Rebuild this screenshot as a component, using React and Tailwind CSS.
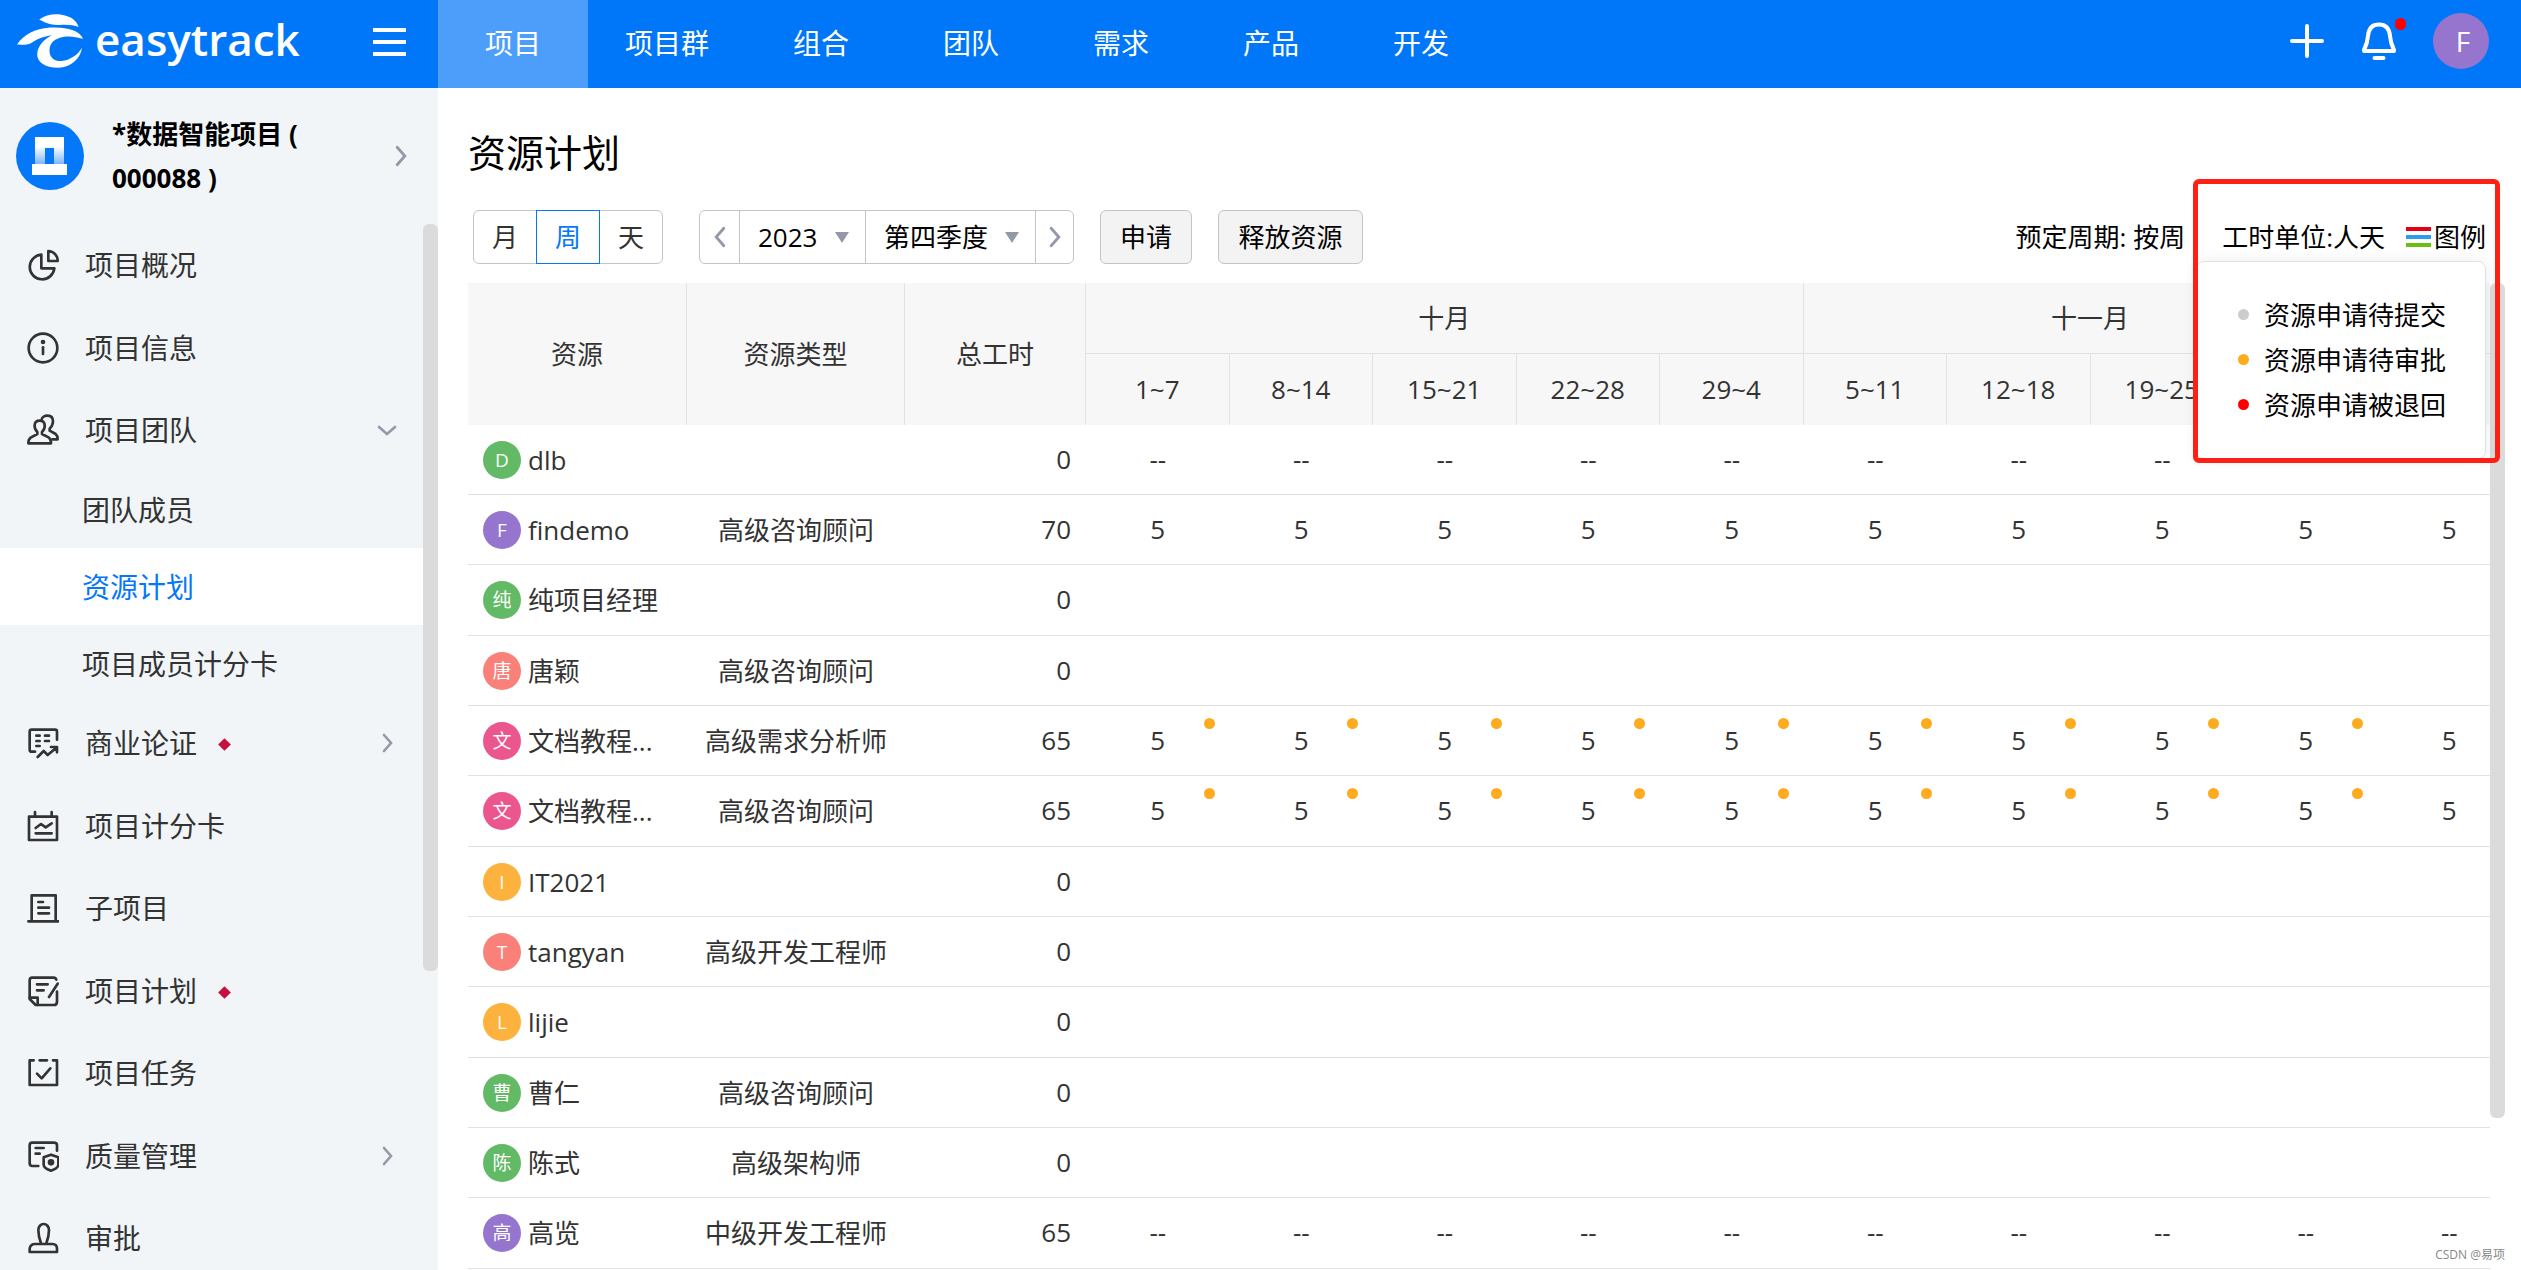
import React, { useState } from "react";

const NAV = ["项目", "项目群", "组合", "团队", "需求", "产品", "开发"];

const WEEKS = ["1~7", "8~14", "15~21", "22~28", "29~4", "5~11", "12~18", "19~25", "26~2", "3~9"];

const RESOURCES = [
  { id: 1, initial: "D", color: "bg-[#62b966]", name: "dlb", type: "", total: 0, value: "--" },
  { id: 2, initial: "F", color: "bg-[#9575cd]", name: "findemo", type: "高级咨询顾问", total: 70, value: "5" },
  { id: 3, initial: "纯", color: "bg-[#62b966]", name: "纯项目经理", type: "", total: 0, value: "" },
  { id: 4, initial: "唐", color: "bg-[#fa807a]", name: "唐颖", type: "高级咨询顾问", total: 0, value: "" },
  { id: 5, initial: "文", color: "bg-[#ec568f]", name: "文档教程...", type: "高级需求分析师", total: 65, value: "5", pending: true },
  { id: 6, initial: "文", color: "bg-[#ec568f]", name: "文档教程...", type: "高级咨询顾问", total: 65, value: "5", pending: true },
  { id: 7, initial: "I", color: "bg-[#fcb23c]", name: "IT2021", type: "", total: 0, value: "" },
  { id: 8, initial: "T", color: "bg-[#fa807a]", name: "tangyan", type: "高级开发工程师", total: 0, value: "" },
  { id: 9, initial: "L", color: "bg-[#fcb23c]", name: "lijie", type: "", total: 0, value: "" },
  { id: 10, initial: "曹", color: "bg-[#62b966]", name: "曹仁", type: "高级咨询顾问", total: 0, value: "" },
  { id: 11, initial: "陈", color: "bg-[#62b966]", name: "陈式", type: "高级架构师", total: 0, value: "" },
  { id: 12, initial: "高", color: "bg-[#9575cd]", name: "高览", type: "中级开发工程师", total: 65, value: "--" },
];

const LEGEND = [
  { label: "资源申请待提交", color: "bg-[#cccccc]" },
  { label: "资源申请待审批", color: "bg-[#ffab1f]" },
  { label: "资源申请被退回", color: "bg-[#ff0000]" },
];

const ICONS = {
  pie: <path d="M43 17A37 37 0 1 0 82 58H43ZM64 6A29 29 0 0 1 92 36H64Z" />,
  info: (
    <>
      <circle cx="48" cy="48" r="43" />
      <path d="M48 46V66" />
      <circle cx="48" cy="30" r="3" fill="currentColor" />
    </>
  ),
  team: (
    <>
      <path d="M31 54C20 44 18 20 38 20C58 20 56 44 45 54V60L66 71Q72 76 72 88H4Q4 76 11 71L31 60Z" />
      <path d="M44 16C46 2 78 -2 78 22C78 34 74 38 68 44V50L86 60Q92 65 92 76H76" />
    </>
  ),
  business: (
    <>
      <path d="M24 74H14Q8 74 8 68V14Q8 8 14 8H84Q90 8 90 14V38" />
      <path d="M28 26H38M54 26H66M28 42H38M54 42H66M28 57H38" />
      <path d="M32 90L50 72L62 84L88 62M72 60H90V76" />
    </>
  ),
  score: (
    <>
      <path d="M6 20H90V90H6ZM24 6V20M74 6V20" />
      <path d="M26 54L42 42L56 52L74 40M26 70H74" />
    </>
  ),
  sub: (
    <>
      <path d="M14 88V10H86V88M4 88H94" />
      <path d="M34 30H48M34 47H66M34 64H66" />
    </>
  ),
  plan: (
    <>
      <path d="M88 14Q86 8 80 8H16Q8 8 8 16V72L26 90H80Q90 90 90 80V50" />
      <path d="M8 68H32V90M30 28H62M30 46H50M92 26L66 66" />
    </>
  ),
  task: (
    <>
      <path d="M20 10H8V84H90V10H78M38 10H60" />
      <path d="M30 50L44 64L70 34" />
    </>
  ),
  quality: (
    <>
      <path d="M34 78H16Q8 78 8 70V16Q8 8 16 8H80Q90 8 90 16V32" />
      <path d="M26 24H50M26 41H38M72 44L94 52V74Q94 84 72 92Q50 84 50 74V52Z" />
      <circle cx="72" cy="67" r="6" fill="currentColor" />
    </>
  ),
  approve: (
    <>
      <path d="M42 64C36 48 34 36 34 24A16 18 0 0 1 66 24C66 36 64 48 58 64" />
      <path d="M8 90V80Q10 66 24 66H76Q90 66 90 80V90Z" />
    </>
  ),
};

const MenuIcon = ({ name }) => (
  <svg
    viewBox="0 0 96 96"
    className="h-8 w-8 shrink-0"
    fill="none"
    stroke="currentColor"
    strokeWidth="8"
    strokeLinecap="round"
    strokeLinejoin="round"
    aria-hidden="true"
  >
    {ICONS[name]}
  </svg>
);

const Chevron = ({ className, d = "M2 2L9 10L2 18", box = "0 0 11 20" }) => (
  <svg viewBox={box} className={className} fill="none" stroke="#9499aa" strokeWidth="2.6" strokeLinecap="round" aria-hidden="true">
    <path d={d} />
  </svg>
);

const Logo = () => (
  <a href="#" className="flex items-center text-white">
    <svg viewBox="51 42 199 161" className="h-[54px] w-[66px]" fill="currentColor" aria-hidden="true">
      <path d="M118 58C135 44 160 40 185 43C215 48 230 60 237 80C222 74 200 72 180 74C155 76 135 68 118 58Z" />
      <path d="M51 133C70 105 105 85 150 82C195 79 240 88 250 116C225 108 200 106 180 113C160 120 149 132 149 152C149 174 165 184 185 183C210 180 235 165 247 142C243 175 215 202 175 203C135 203 110 185 112 160C114 138 130 118 156 105C130 108 108 118 95 128C80 138 65 132 51 133Z" />
    </svg>
    <span className="ml-3 pb-1 text-[44px] leading-none font-semibold">easytrack</span>
  </a>
);

const MenuItem = ({ icon, label, marked, arrow }) => (
  <li className="h-[82px] even:h-[83px]">
    <a href="#" className="flex h-full items-center pr-[26px] pl-[27px]">
      <MenuIcon name={icon} />
      <span className="ml-[26px]">{label}</span>
      {marked && <span className="mt-[3px] ml-[23px] h-[9px] w-[9px] rotate-45 bg-[#c8103e]" />}
      {arrow === "right" && <Chevron className="mr-1 ml-auto h-5 w-[11px]" />}
      {arrow === "down" && <Chevron className="ml-auto h-[11px] w-5" d="M2 2L10 9L18 2" box="0 0 20 11" />}
    </a>
  </li>
);

const Sidebar = () => (
  <aside className="flex w-[438px] shrink-0 flex-col overflow-hidden bg-[#f1f5f8]">
    <a href="#" className="flex h-[136px] shrink-0 items-center pr-[31px] pl-4 text-black">
      <svg viewBox="0 0 68 68" className="h-[68px] w-[68px] shrink-0" aria-hidden="true">
        <defs>
          <linearGradient id="tower" x1="0" y1="0" x2="0" y2="1">
            <stop offset="0.35" stopColor="#fff" />
            <stop offset="1" stopColor="#7db6fb" />
          </linearGradient>
        </defs>
        <circle cx="34" cy="34" r="34" fill="#0577f9" />
        <path d="M19 15H48V42H38V26H29V42H19Z" fill="url(#tower)" />
        <path d="M16 42H51V53H16Z" fill="#fff" />
      </svg>
      <span className="ml-7 w-[220px] text-[26px] leading-[44px] font-bold">*数据智能项目 ( 000088 )</span>
      <Chevron className="ml-auto h-[22px] w-3" />
    </a>
    <div className="flex min-h-0 flex-1 text-[28px] text-[#333]">
      <ul className="min-w-0 flex-1">
        <MenuItem icon="pie" label="项目概况" />
        <MenuItem icon="info" label="项目信息" />
        <MenuItem icon="team" label="项目团队" arrow="down" />
        <li>
          <ul>
            <li>
              <a href="#" className="flex h-[77px] items-center pl-[82px]">团队成员</a>
            </li>
            <li>
              <a href="#" className="flex h-[77px] items-center bg-white pl-[82px] text-[#0577f9]">资源计划</a>
            </li>
            <li>
              <a href="#" className="flex h-[77px] items-center pl-[82px]">项目成员计分卡</a>
            </li>
          </ul>
        </li>
        <MenuItem icon="business" label="商业论证" marked arrow="right" />
        <MenuItem icon="score" label="项目计分卡" />
        <MenuItem icon="sub" label="子项目" />
        <MenuItem icon="plan" label="项目计划" marked />
        <MenuItem icon="task" label="项目任务" />
        <MenuItem icon="quality" label="质量管理" arrow="right" />
        <MenuItem icon="approve" label="审批" />
      </ul>
      <div className="h-[747px] w-[15px] rounded-md bg-[#dbdbdb]" />
    </div>
  </aside>
);

const Header = () => (
  <header className="flex h-[88px] shrink-0 items-stretch bg-[#0077f9] text-[28px] text-white">
    <div className="flex w-[438px] shrink-0 items-center justify-between pr-8 pb-1.5 pl-[17px]">
      <Logo />
      <button type="button" aria-label="菜单" className="flex w-[33px] flex-col gap-2 pt-0.5">
        <span className="h-1 bg-white" />
        <span className="h-1 bg-white" />
        <span className="h-1 bg-white" />
      </button>
    </div>
    <nav className="flex">
      {NAV.map((item, i) => (
        <a
          key={item}
          href="#"
          className={`flex min-w-[150px] items-center justify-center px-[37px] pb-[3px] ${i === 0 ? "bg-[#4d9efb]" : ""}`}
        >
          {item}
        </a>
      ))}
    </nav>
    <div className="ml-auto flex items-center pr-8 pb-1.5">
      <button type="button" aria-label="新建">
        <svg viewBox="0 0 34 34" className="h-[34px] w-[34px]" stroke="currentColor" strokeWidth="4" strokeLinecap="round">
          <path d="M17 2V32M2 17H32" />
        </svg>
      </button>
      <button type="button" aria-label="通知" className="relative ml-[37px]">
        <svg viewBox="0 0 36 38" className="h-[38px] w-9" fill="none" stroke="currentColor" strokeWidth="4" strokeLinecap="round" strokeLinejoin="round">
          <path d="M18 2.500C10 2.500 7.500 8 7 14C6.500 21 5 24 3 28V29H33V28C31 24 29.500 21 29 14C28.500 8 26 2.500 18 2.500ZM13.500 36H22.500" />
        </svg>
        <span className="absolute -top-1 -right-[9px] h-3 w-[11px] rounded-full bg-[#ff0000]" />
      </button>
      <span className="ml-9 flex h-14 w-14 items-center justify-center rounded-full bg-[#9575cd] pl-1 text-[28px]">F</span>
    </div>
  </header>
);

const LegendPopup = () => (
  <div className="absolute top-[51px] right-0 z-10 w-[290px] rounded-lg border border-[#e2e2e2] bg-white pt-[30px] pb-[31px] pl-[41px] shadow-[0_0_16px_rgba(0,0,0,0.08)]">
    <ul>
      {LEGEND.map((item) => (
        <li key={item.label} className="flex h-[45px] items-center">
          <span className={`h-[11px] w-[11px] rounded-full ${item.color}`} />
          <span className="ml-[15px]">{item.label}</span>
        </li>
      ))}
    </ul>
  </div>
);

const PickerSelect = ({ label, value, options, onChange, className }) => (
  <div className="relative flex items-center border-l border-[#c4c4c4]">
    <select
      aria-label={label}
      value={value}
      onChange={(e) => onChange(e.target.value)}
      className={`h-full appearance-none bg-transparent pl-[18px] outline-none ${className}`}
    >
      {options.map((o) => (
        <option key={o}>{o}</option>
      ))}
    </select>
    <svg viewBox="0 0 14 11" className="pointer-events-none absolute right-4 h-[11px] w-3.5" aria-hidden="true">
      <path d="M0 0H14L7 11Z" fill="#9499aa" />
    </svg>
  </div>
);

const Toolbar = () => {
  const [unit, setUnit] = useState("周");
  const [year, setYear] = useState("2023");
  const [quarter, setQuarter] = useState("第四季度");

  return (
    <div className="mt-[30px] flex h-[54px] items-stretch pr-[19px] pl-[5px] text-black">
      <div className="flex text-[#333]">
        {["月", "周", "天"].map((u) => (
          <button
            key={u}
            type="button"
            onClick={() => setUnit(u)}
            className={`-mr-px w-16 border first:rounded-l-md last:rounded-r-md ${
              u === unit ? "z-10 border-[#0577f9] text-[#0577f9]" : "border-[#c4c4c4]"
            }`}
          >
            {u}
          </button>
        ))}
      </div>

      <div className="ml-[37px] flex rounded-md border border-[#c4c4c4]">
        <button type="button" aria-label="上一季度" className="flex w-[39px] items-center justify-center">
          <Chevron className="h-[22px] w-3" d="M9 2L2 10L9 18" />
        </button>
        <PickerSelect label="年份" value={year} options={["2022", "2023", "2024"]} onChange={setYear} className="w-[125px]" />
        <PickerSelect
          label="季度"
          value={quarter}
          options={["第一季度", "第二季度", "第三季度", "第四季度"]}
          onChange={setQuarter}
          className="w-[169px]"
        />
        <button type="button" aria-label="下一季度" className="flex w-[38px] items-center justify-center border-l border-[#c4c4c4]">
          <Chevron className="h-[22px] w-3" />
        </button>
      </div>

      <button type="button" className="ml-[26px] w-[92px] rounded-md border border-[#c4c4c4] bg-[#f3f3f3]">申请</button>
      <button type="button" className="ml-[26px] w-[145px] rounded-md border border-[#c4c4c4] bg-[#f3f3f3]">释放资源</button>

      <div className="ml-auto flex items-center">
        <span>预定周期: 按周</span>
        <div className="relative ml-[37px] flex items-center self-stretch">
          <span>工时单位:人天</span>
          <button type="button" className="ml-[21px] flex items-center gap-[3px]">
            <span className="flex w-[25px] flex-col gap-1">
              <span className="h-1 bg-[#e60012]" />
              <span className="h-1 bg-[#2a9df0]" />
              <span className="h-1 bg-[#6abf11]" />
            </span>
            图例
          </button>
          <LegendPopup />
          {/* highlight frame round the unit label and the legend */}
          <div className="pointer-events-none absolute -top-[31px] -right-[14px] z-20 h-[284px] w-[307px] rounded-md border-[5px] border-[#ff2015]" />
        </div>
      </div>
    </div>
  );
};

const ResourceTable = () => (
  <div className="mt-[19px] flex min-h-0 flex-1 items-start">
    <div className="min-w-0 flex-1 overflow-hidden">
      <table className="w-[2053px] table-fixed border-separate border-spacing-0 text-center text-[#333]">
        <colgroup>
          <col className="w-[219px]" />
          <col className="w-[218px]" />
          <col className="w-[181px]" />
          {WEEKS.map((w) => (
            <col key={w} />
          ))}
        </colgroup>
        <thead className="bg-[#f7f7f7]">
          <tr className="h-[71px]">
            <th rowSpan={2} className="border-r border-[#e2e2e2] font-normal">资源</th>
            <th rowSpan={2} className="border-r border-[#e2e2e2] font-normal">资源类型</th>
            <th rowSpan={2} className="border-r border-[#e2e2e2] font-normal">总工时</th>
            <th colSpan={5} className="border-r border-b border-[#e2e2e2] font-normal">十月</th>
            <th colSpan={4} className="border-r border-b border-[#e2e2e2] font-normal">十一月</th>
            <th className="border-b border-[#e2e2e2] font-normal">十二月</th>
          </tr>
          <tr className="h-[71px]">
            {WEEKS.map((w) => (
              <th key={w} className="border-r border-[#e2e2e2] pb-0.5 font-normal">{w}</th>
            ))}
          </tr>
        </thead>
        <tbody>
          {RESOURCES.map((r) => (
            <tr key={r.id} className="h-[70px] nth-[3n]:h-[71px]">
              <td className="border-b border-[#e2e2e2] pl-[15px]">
                <div className="flex items-center gap-[7px]">
                  <span className={`flex h-[38px] w-[38px] shrink-0 items-center justify-center rounded-full text-[19px] text-white ${r.color}`}>
                    {r.initial}
                  </span>
                  <span className="whitespace-nowrap">{r.name}</span>
                </div>
              </td>
              <td className="border-b border-[#e2e2e2]">{r.type}</td>
              <td className="border-b border-[#e2e2e2] pr-[15px] pb-0.5 text-right">{r.total}</td>
              {WEEKS.map((w) => (
                <td key={w} className="relative border-b border-[#e2e2e2] pb-0.5">
                  {r.value}
                  {r.pending && <span className="absolute top-3 right-[15px] h-[11px] w-[11px] rounded-full bg-[#ffab1f]" />}
                </td>
              ))}
            </tr>
          ))}
        </tbody>
      </table>
    </div>
    <div className="h-[835px] w-[15px] shrink-0 rounded-md bg-[#dbdbdb]" />
  </div>
);

const App = () => (
  <div className="relative flex h-screen flex-col overflow-hidden bg-white font-['Open_Sans','Noto_Sans_CJK_SC',sans-serif]">
    <Header />
    <div className="flex min-h-0 flex-1">
      <Sidebar />
      <main className="flex min-w-0 flex-1 flex-col pt-9 pr-4 pl-[30px] text-[26px] leading-9">
        <h1 className="text-[38px] leading-[56px] text-black">资源计划</h1>
        <Toolbar />
        <ResourceTable />
      </main>
    </div>
    <span className="absolute right-4 bottom-[7px] text-xs text-[#888]">CSDN @易项</span>
  </div>
);

export default App;
